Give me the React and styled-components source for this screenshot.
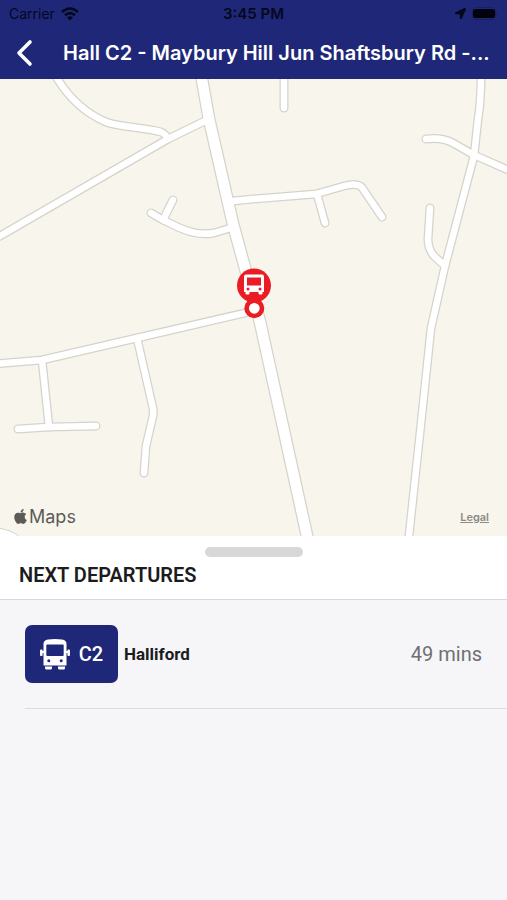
import React from 'react';
import styled, { createGlobalStyle } from 'styled-components';
import { FaApple, FaLocationArrow } from 'react-icons/fa';

const GlobalStyle = createGlobalStyle`
  * {
    box-sizing: border-box;
  }
  body {
    margin: 0;
    background-color: #f6f6f8;
    font-family: Roboto, "Liberation Sans", sans-serif;
  }
`
const Page = styled.div`
  display: flex;
  flex-direction: column;
  min-height: 100vh;
`
const Header = styled.header`
  background-color: #1f2878;
  font-family: Inter, "Liberation Sans", sans-serif;
`
const StatusBar = styled.div`
  display: grid;
  grid-template-columns: 1fr auto 1fr;
  align-items: center;
  height: 27px;
  padding: 0 9px;
  font-size: 14px;
  color: #05071c;
`
const StatusGroup = styled.div`
  display: flex;
  align-items: center;
  gap: 6px;
  justify-content: ${props => props.$end ? 'flex-end' : 'flex-start'};
`
const Clock = styled.span`
  font-size: 15px;
  font-weight: 600;
`
const NavBar = styled.div`
  display: flex;
  align-items: center;
  height: 52px;
  padding: 0 15px 0 16px;
`
const BackButton = styled.button`
  display: flex;
  flex: none;
  width: 47px;
  padding: 0;
  border: none;
  background: none;
  color: white;
  cursor: pointer;
`
const Title = styled.h1`
  flex: 1;
  margin: 0;
  white-space: nowrap;
  font-size: 20px;
  font-weight: 600;
  line-height: 28px;
  color: white;
`
const MapArea = styled.section`
  position: relative;
  flex: 1;
  min-height: 240px;
  background-color: #f8f5ed;
`
const MapDrawing = styled.svg`
  position: absolute;
  width: 100%;
  height: 100%;
`
const MapFooter = styled.div`
  position: absolute;
  left: 0;
  right: 0;
  bottom: 9px;
  display: flex;
  align-items: center;
  justify-content: space-between;
  padding: 0 18px 0 12px;
  font-family: Inter, "Liberation Sans", sans-serif;
  color: #5d5b57;
`
const MapBrand = styled.span`
  display: flex;
  align-items: center;
  font-size: 18px;
`
const LegalLink = styled.a`
  font-size: 11px;
  font-weight: 600;
  color: #8d8b86;
`
const Sheet = styled.section`
  min-height: 364px;
`
const SheetHeader = styled.div`
  display: flex;
  flex-direction: column;
  height: 64px;
  padding: 11px 19px 0;
  background-color: white;
  border-bottom: 1px solid #d8d8da;
`
const Handle = styled.div`
  align-self: center;
  width: 98px;
  height: 10px;
  border-radius: 5px;
  background-color: #d8d8d8;
`
const SheetTitle = styled.h2`
  margin: 6px 0 0;
  font-size: 20px;
  font-weight: 600;
  line-height: 24px;
  color: #1c1c1e;
`
const Departures = styled.ul`
  margin: 0;
  padding: 0 0 0 25px;
  list-style: none;
`
const Departure = styled.li`
  display: flex;
  align-items: center;
  gap: 6px;
  height: 109px;
  padding-right: 25px;
  border-bottom: 1px solid #dcdcde;
`
const RouteBadge = styled.span`
  display: flex;
  align-items: center;
  justify-content: center;
  gap: 9px;
  width: 93px;
  height: 58px;
  border-radius: 7px;
  background-color: #1f2878;
  font-size: 20px;
  font-weight: 500;
  color: white;
`
const Destination = styled.span`
  flex: 1;
  font-size: 17px;
  font-weight: 700;
  line-height: 26px;
  color: #1c1c1e;
`
const Due = styled.span`
  font-size: 20px;
  line-height: 24px;
  color: #6f6f73;
`

const mainRoad = 'M201 -5 L209 40 L233 145 L248 200 L260 243 L309 466';
const roads = [
  'M-6 160 L0 157 L168 60 L209 40',
  'M55 -4 C69 20 87 35 106 43 C118 48 142 48 161 53 Q164 54 168 59',
  'M151 134 L163 141 L180 149 Q198 157 214 154 L234 148',
  'M173 121 L163 141',
  'M233 122 L253 120 L316 115 L344 107 Q359 103 363 110 L382 138',
  'M317 115 L325 144',
  'M284 -5 V29',
  'M481 -5 Q481 24 478 40 L474 77 L445 187 L431 249 L420 354 L408 466',
  'M426 60 Q442 58 453 64 L474 76 L515 94',
  'M430 129 L428 160 Q428 170 434 177 L445 187',
  'M-6 285 L42 281 L137 259 L258 231',
  'M42 281 L49 348',
  'M18 350 L49 348 L96 347',
  'M137 259 L152 325 Q154 332 153 337 L146 367 L144 394',
];

function MapView() {
  return (
    <MapDrawing viewBox="0 0 507 457" preserveAspectRatio="xMidYMid slice" fill="none" aria-hidden="true">
      <g stroke="#d6d3cb" strokeLinecap="round" strokeLinejoin="round">
        <path d={mainRoad} strokeWidth="13" />
        {roads.map(d => <path key={d} d={d} strokeWidth="9" />)}
      </g>
      <g stroke="white" strokeLinecap="round" strokeLinejoin="round">
        <path d={mainRoad} strokeWidth="10.5" />
        {roads.map(d => <path key={d} d={d} strokeWidth="6.5" />)}
      </g>
      <path d="M-2 449 Q12 451 20 458 L-2 470 Z" fill="white" stroke="#d6d3cb" />
      <circle cx="254" cy="206.5" r="17" fill="#ea1c24" />
      <path d="M246 195.5 h16 q2 0 2 2 v15.5 h-1.5 v1.5 q0 1 -1 1 h-2 q-1 0 -1 -1 v-1.5 h-9 v1.5 q0 1 -1 1 h-2 q-1 0 -1 -1 v-1.5 h-1.5 v-15.5 q0 -2 2 -2 Z" fill="white" />
      <path d="M247 198.5 h14 v8 h-14 Z" fill="#ea1c24" />
      <circle cx="248" cy="210" r="1.5" fill="#ea1c24" />
      <circle cx="260" cy="210" r="1.5" fill="#ea1c24" />
      <circle cx="254.3" cy="229.3" r="7.7" fill="white" stroke="#ea1c24" strokeWidth="4.6" />
    </MapDrawing>
  );
}

function WifiIcon() {
  return (
    <svg width="18" height="14" viewBox="0 0 18 14" fill="none" stroke="currentColor" strokeWidth="2.6" aria-hidden="true">
      <path d="M1 5 Q9 -2 17 5" />
      <path d="M4 8.3 Q9 4 14 8.3" />
      <path d="M9 13.5 L5.9 10.4 Q9 8 12.1 10.4 Z" fill="currentColor" stroke="none" />
    </svg>
  );
}

function BatteryIcon() {
  return (
    <svg width="26" height="13" viewBox="0 0 26 13" aria-hidden="true">
      <rect x="0.5" y="0.5" width="23" height="12" rx="3.5" fill="none" stroke="currentColor" strokeOpacity="0.2" />
      <rect x="1" y="2" width="22" height="9" rx="2.5" fill="#02030c" />
      <path d="M24.5 4.5 q1.5 2 0 4 Z" fill="currentColor" fillOpacity="0.3" />
    </svg>
  );
}

function BusIcon() {
  return (
    <svg width="30" height="31" viewBox="0 0 30 31" fill="white" aria-hidden="true">
      <path d="M8 0.5 Q15 -0.5 22 0.5 Q26.5 1 26.5 5 V26.5 H3.5 V5 Q3.5 1 8 0.5 Z" />
      <rect x="0" y="10.5" width="2.6" height="6.5" rx="1" />
      <rect x="27.4" y="10.5" width="2.6" height="6.5" rx="1" />
      <rect x="2" y="12" width="26" height="2" />
      <path d="M5 27.5 H12 V29 Q12 30.5 10.5 30.5 H6.5 Q5 30.5 5 29 Z" />
      <path d="M18 27.5 H25 V29 Q25 30.5 23.5 30.5 H19.5 Q18 30.5 18 29 Z" />
      <rect x="6.3" y="5.5" width="17.4" height="11.5" rx="1" fill="#1f2878" />
      <circle cx="8.8" cy="21.8" r="1.5" fill="#1f2878" />
      <circle cx="21.2" cy="21.8" r="1.5" fill="#1f2878" />
    </svg>
  );
}

const departures = [
  { route: 'C2', destination: 'Halliford', due: '49 mins' },
];

function App() {
  return (
    <Page>
      <GlobalStyle />
      <Header>
        <StatusBar>
          <StatusGroup>
            <span>Carrier</span>
            <WifiIcon />
          </StatusGroup>
          <Clock>3:45 PM</Clock>
          <StatusGroup $end>
            <FaLocationArrow size={11} />
            <BatteryIcon />
          </StatusGroup>
        </StatusBar>
        <NavBar>
          <BackButton aria-label="Back">
            <svg width="18" height="28" viewBox="0 0 18 28" fill="none" stroke="currentColor" strokeWidth="3.6" strokeLinecap="round" strokeLinejoin="round">
              <path d="M14 3 L3 14 L14 25" />
            </svg>
          </BackButton>
          <Title>Hall C2 - Maybury Hill Jun Shaftsbury Rd -...</Title>
        </NavBar>
      </Header>
      <MapArea>
        <MapView />
        <MapFooter>
          <MapBrand>
            <FaApple size={17} />
            Maps
          </MapBrand>
          <LegalLink href="#legal">Legal</LegalLink>
        </MapFooter>
      </MapArea>
      <Sheet>
        <SheetHeader>
          <Handle />
          <SheetTitle>NEXT DEPARTURES</SheetTitle>
        </SheetHeader>
        <Departures>
          {departures.map(item => (
            <Departure key={item.route}>
              <RouteBadge>
                <BusIcon />
                {item.route}
              </RouteBadge>
              <Destination>{item.destination}</Destination>
              <Due>{item.due}</Due>
            </Departure>
          ))}
        </Departures>
      </Sheet>
    </Page>
  );
}

export default App;
